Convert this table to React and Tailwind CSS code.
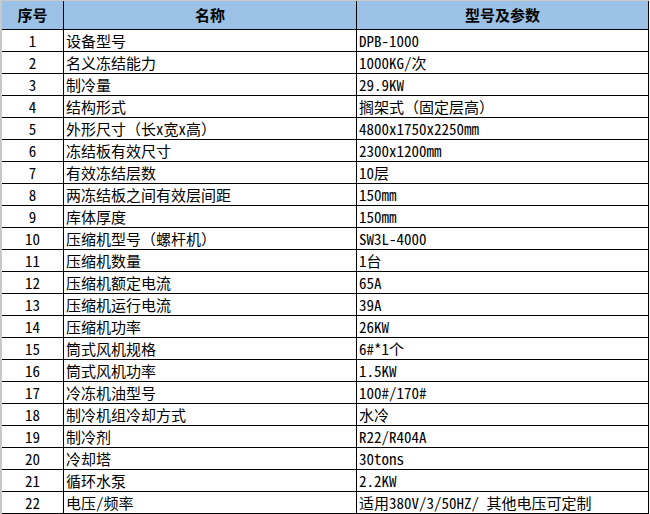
const rows = [
  ["1", "设备型号", "DPB-1000"],
  ["2", "名义冻结能力", "1000KG/次"],
  ["3", "制冷量", "29.9KW"],
  ["4", "结构形式", "搁架式（固定层高）"],
  ["5", "外形尺寸（长x宽x高）", "4800x1750x2250mm"],
  ["6", "冻结板有效尺寸", "2300x1200mm"],
  ["7", "有效冻结层数", "10层"],
  ["8", "两冻结板之间有效层间距", "150mm"],
  ["9", "库体厚度", "150mm"],
  ["10", "压缩机型号（螺杆机）", "SW3L-4000"],
  ["11", "压缩机数量", "1台"],
  ["12", "压缩机额定电流", "65A"],
  ["13", "压缩机运行电流", "39A"],
  ["14", "压缩机功率", "26KW"],
  ["15", "筒式风机规格", "6#*1个"],
  ["16", "筒式风机功率", "1.5KW"],
  ["17", "冷冻机油型号", "100#/170#"],
  ["18", "制冷机组冷却方式", "水冷"],
  ["19", "制冷剂", "R22/R404A"],
  ["20", "冷却塔", "30tons"],
  ["21", "循环水泵", "2.2KW"],
  ["22", "电压/频率", "适用380V/3/50HZ/ 其他电压可定制"],
];

export default function App() {
  return (
    <div
      className="w-[650px] h-[514px] overflow-hidden bg-white text-black"
      style={{ fontFamily: '"Noto Sans Mono CJK SC", "Noto Sans CJK SC", "Liberation Mono", monospace' }}
    >
      <div className="w-[649px] border-t border-l-2 border-[#c8c8c8]">

        {/* HEADER */}
        <div className="flex h-[29px] bg-[#9bc2e6] border-b border-black text-[15px] font-bold">
          <div className="w-[62px] shrink-0 border-r border-black flex items-center justify-center">序号</div>
          <div className="w-[293px] shrink-0 border-r border-black flex items-center justify-center">名称</div>
          <div className="w-[292px] shrink-0 border-r border-black flex items-center justify-center">型号及参数</div>
        </div>

        {/* ROWS */}
        {rows.map(([no, name, value]) => (
          <div key={no} className="flex h-[22px] border-b border-black text-[15px] leading-none">
            <div className="w-[62px] shrink-0 border-r border-black flex items-center justify-center">{no}</div>
            <div className="w-[293px] shrink-0 border-r border-black flex items-center pl-[2px] whitespace-nowrap">{name}</div>
            <div className="w-[292px] shrink-0 border-r border-black flex items-center pl-[2px] whitespace-nowrap">{value}</div>
          </div>
        ))}

      </div>
    </div>
  );
}
